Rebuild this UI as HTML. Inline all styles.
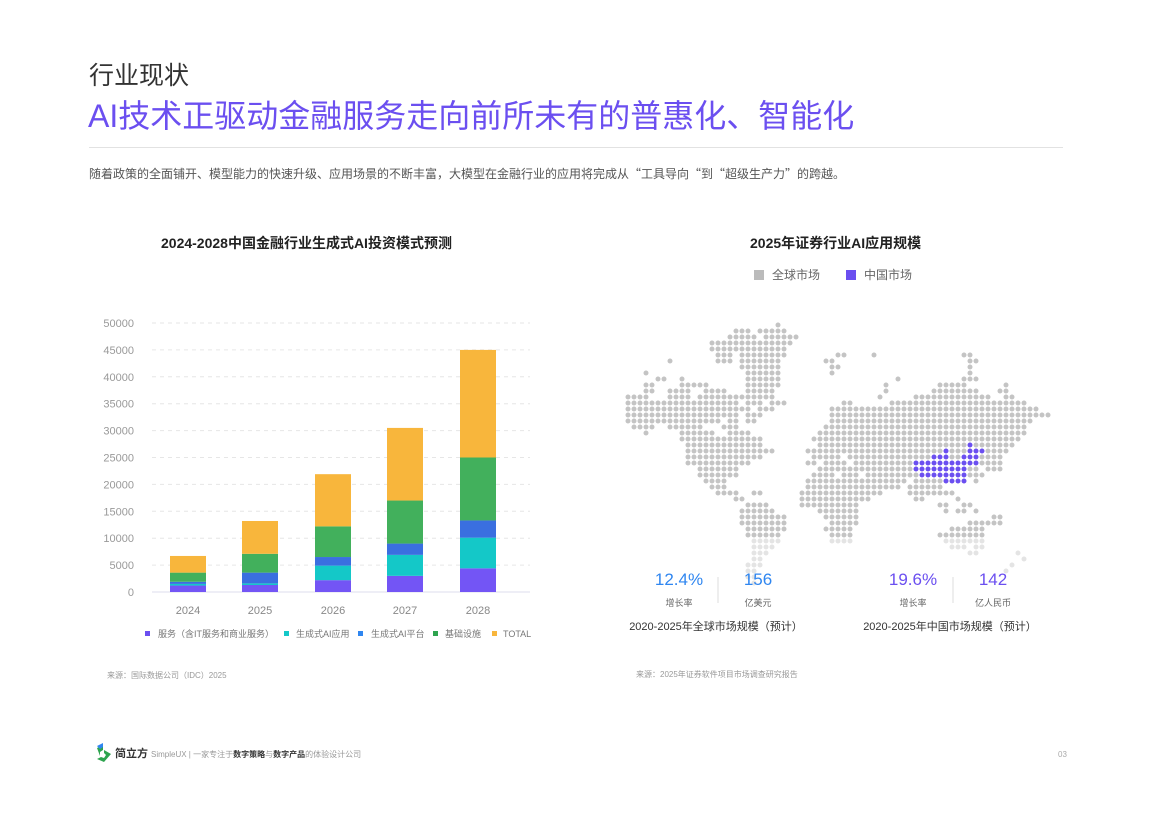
<!DOCTYPE html>
<html><head><meta charset="utf-8">
<style>
body{margin:0;width:1153px;height:816px;background:#fff;font-family:"Liberation Sans","Noto Sans CJK SC",sans-serif;position:relative;overflow:hidden}
.a{position:absolute;white-space:nowrap}
</style></head><body>
<div class="a" style="left:89px;top:56px;font-size:25px;color:#333">行业现状</div>
<div class="a" style="left:88px;top:91px;font-size:32px;color:#6b4ff0">AI技术正驱动金融服务走向前所未有的普惠化、智能化</div>
<div class="a" style="left:89px;top:147px;width:974px;height:1px;background:#e2e2e2"></div>
<div class="a" style="left:89px;top:165px;font-size:12px;color:#555;font-family:'Noto Sans CJK SC',sans-serif">随着政策的全面铺开、模型能力的快速升级、应用场景的不断丰富，大模型在金融行业的应用将完成从“工具导向“到“超级生产力”的跨越。</div>
<div class="a" style="left:161px;top:233px;font-size:14px;font-weight:bold;color:#222">2024-2028中国金融行业生成式AI投资模式预测</div>
<div class="a" style="left:750px;top:233px;font-size:14px;font-weight:bold;color:#222">2025年证券行业AI应用规模</div>
<div class="a" style="left:754px;top:266px;font-size:12px;color:#666"><span style="display:inline-block;width:10px;height:10px;background:#bbb;margin-right:8px;vertical-align:-1px"></span>全球市场<span style="display:inline-block;width:10px;height:10px;background:#6b4ff0;margin:0 8px 0 26px;vertical-align:-1px"></span>中国市场</div>

<svg class="a" style="left:0;top:0" width="1153" height="816" font-family="Liberation Sans,Noto Sans CJK SC,sans-serif">
<g font-size="11" fill="#999" text-anchor="end" id="yl"></g>
<g id="bars"></g>
<g font-size="11" fill="#888" text-anchor="middle">
<text x="188" y="614">2024</text><text x="260" y="614">2025</text><text x="333" y="614">2026</text><text x="405" y="614">2027</text><text x="478" y="614">2028</text></g>
<g font-size="9" fill="#777">
<rect x="145" y="631" width="5" height="5" fill="#6b4ff0"/><text x="158" y="637">服务（含IT服务和商业服务）</text>
<rect x="284" y="631" width="5" height="5" fill="#14c8c8"/><text x="296" y="637">生成式AI应用</text>
<rect x="358" y="631" width="5" height="5" fill="#2f86f0"/><text x="371" y="637">生成式AI平台</text>
<rect x="433" y="631" width="5" height="5" fill="#2ea44f"/><text x="445" y="637">基础设施</text>
<rect x="492" y="631" width="5" height="5" fill="#f8b63c"/><text x="503" y="637">TOTAL</text></g>
<text x="107" y="678" font-size="8" fill="#999">来源：国际数据公司（IDC）2025</text>
<g id="map"></g>
<g text-anchor="middle">
<text x="679" y="585" font-size="17" fill="#2f86f0">12.4%</text>
<text x="758" y="585" font-size="17" fill="#2f86f0">156</text>
<text x="913" y="585" font-size="17" fill="#6b4ff0">19.6%</text>
<text x="993" y="585" font-size="17" fill="#6b4ff0">142</text>
<g font-size="9" fill="#666"><text x="679" y="606">增长率</text><text x="758" y="606">亿美元</text><text x="913" y="606">增长率</text><text x="993" y="606">亿人民币</text></g>
<g font-size="11" fill="#333"><text x="716" y="630">2020-2025年全球市场规模（预计）</text><text x="950" y="630">2020-2025年中国市场规模（预计）</text></g>
</g>
<line x1="718" y1="577" x2="718" y2="603" stroke="#ddd"/><line x1="953" y1="577" x2="953" y2="603" stroke="#ddd"/>
<text x="636" y="677" font-size="8" fill="#999">来源：2025年证券软件项目市场调查研究报告</text>
<path d="M97 748l6-3 0 5-3 2 0 4zM104 750l7 4-7 8-7-3 4-2 3 1 2-3-2-2z" fill="#2ea44f"/>
<path d="M97 746l6-3v4l-3 2z" fill="#2f86f0"/>
<text x="115" y="757" font-size="11" font-weight="bold" fill="#333">简立方</text>
<text x="151" y="757" font-size="8" fill="#999">SimpleUX  |  一家专注于<tspan fill="#333" font-weight="bold">数字策略</tspan>与<tspan fill="#333" font-weight="bold">数字产品</tspan>的体验设计公司</text>
<text x="1058" y="757" font-size="8" fill="#aaa">03</text>
</svg>
<script>
var ns="http://www.w3.org/2000/svg";
function el(p,t,a){var e=document.createElementNS(ns,t);for(var k in a)e.setAttribute(k,a[k]);if(t=="text")e.textContent=a.t;p.appendChild(e);return e}
var yl=document.getElementById("yl"),bars=document.getElementById("bars");
function Y(v){return 592-v*269/50000}
for(var v=0;v<=50000;v+=5000){var y=Y(v);el(yl,"text",{x:134,y:y+4,t:String(v)});
el(bars,"line",{x1:152,x2:530,y1:y,y2:y,stroke:v?"#e6e6e6":"#dcdcec","stroke-dasharray":v?"4 4":"none"})}
var d=[[1200,1500,1900,3600,6700],[1300,1600,3600,7100,13200],[2200,4900,6500,12200,21900],[3000,6900,9000,17000,30500],[4400,10100,13300,25000,45000]];
var c=["#7355f5","#14c8c8","#3a6fe0","#42b05c","#f8b63c"],cx=[188,260,333,405,478];
d.forEach(function(s,i){var p=0;s.forEach(function(v,j){el(bars,"rect",{x:cx[i]-18,width:36,y:Y(v),height:Y(p)-Y(v),fill:c[j]});p=v})});
var R={0:[[25,25]],1:[[18,20],[22,26]],2:[[17,21],[23,28]],3:[[14,19],[20,27]],4:[[14,26]],5:[[15,17],[19,26],[35,36],[41,41],[56,57]],6:[[7,7],[15,17],[19,25],[33,34],[57,58]],7:[[19,25],[34,35],[57,57]],8:[[3,3],[20,25],[34,34],[57,57]],9:[[5,6],[9,9],[20,25],[45,45],[56,58]],10:[[3,4],[9,13],[20,25],[43,43],[52,56],[63,63]],11:[[3,4],[7,10],[13,16],[20,24],[43,43],[51,58],[62,63]],12:[[0,3],[7,10],[12,19],[20,24],[42,42],[48,60],[63,64]],13:[[0,18],[20,22],[24,26],[36,37],[44,66]],14:[[0,20],[22,24],[34,38],[39,68]],15:[[0,18],[20,22],[34,70]],16:[[0,15],[17,18],[20,21],[34,67]],17:[[1,4],[7,12],[16,18],[33,66]],18:[[3,3],[9,14],[17,20],[32,66]],19:[[9,22],[31,65]],20:[[10,22],[32,64]],21:[[10,24],[30,63]],22:[[10,22],[31,35],[37,62]],23:[[10,20],[30,31],[33,36],[38,62]],24:[[12,18],[32,58],[60,62]],25:[[12,18],[31,34],[36,38],[40,59]],26:[[13,16],[30,46],[48,56],[58,58]],27:[[14,16],[30,45],[47,52]],28:[[15,16],[17,18],[21,22],[29,42],[47,54]],29:[[18,19],[29,40],[48,49],[55,55]],30:[[20,23],[29,38],[52,53],[56,57]],31:[[19,24],[32,38],[53,53],[55,56],[58,58]],32:[[19,26],[33,38],[61,62]],33:[[19,26],[34,38],[57,59],[60,62]],34:[[20,26],[33,37],[54,59]],35:[[20,25],[34,37],[52,59]],36:[[21,25],[34,37],[53,59]],37:[[21,24],[54,56],[58,59]],38:[[21,23],[57,58],[65,65]],39:[[21,22],[66,66]],40:[[20,22],[64,64]],41:[[20,21],[63,63]],42:[[20,21]],43:[[21,21]]};
var P={20:[[57,57]],21:[[53,53],[57,59]],22:[[51,53],[56,58]],23:[[48,58]],24:[[48,56]],25:[[49,56]],26:[[53,56]],27:[[53,55]]};
var m=document.getElementById("map");
function inP(r,c){return (P[r]||[]).some(function(a){return c>=a[0]&&c<=a[1]})}
for(var r in R){R[r].forEach(function(a){for(var k=a[0];k<=a[1];k++){var col=inP(+r,k)?"#6b4ff0":(r>=36?"#e4e4e4":"#c4c4c4");el(m,"circle",{cx:628+k*6,cy:325+r*6,r:2.5,fill:col})}})}
</script>
</body></html>
